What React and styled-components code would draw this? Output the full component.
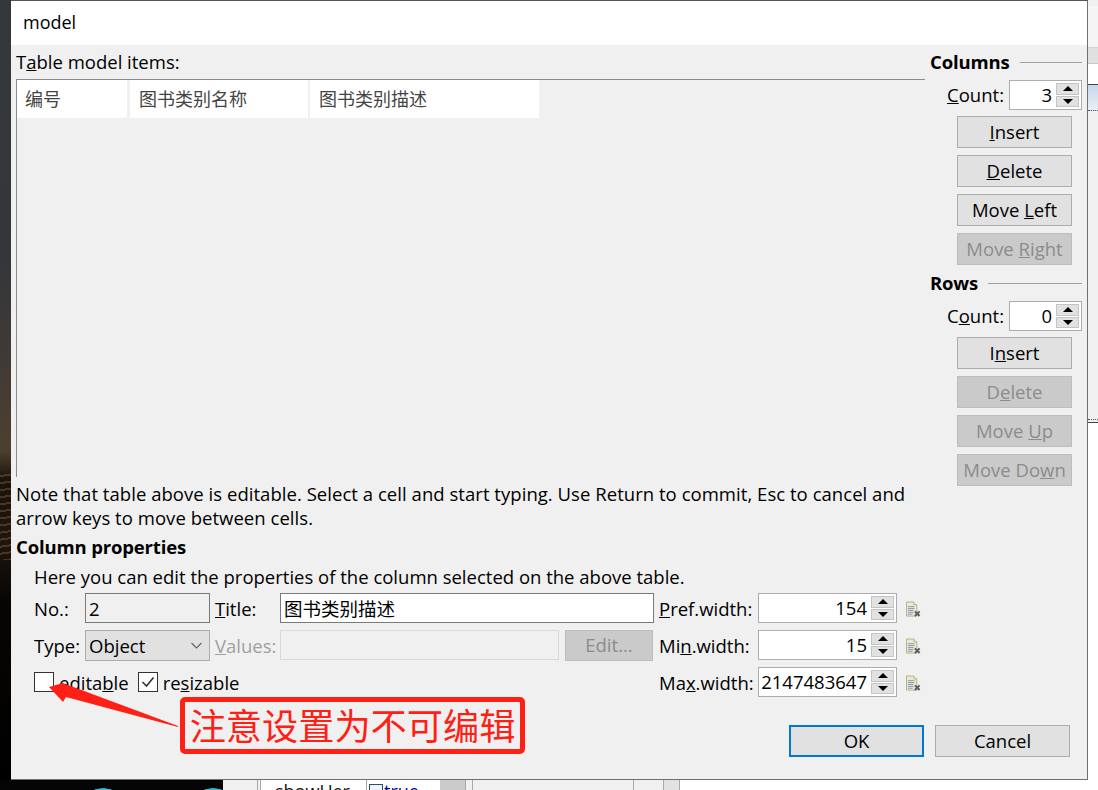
import styled, { createGlobalStyle } from "styled-components"

const UI_FONT = `"Open Sans", "Noto Sans CJK SC", sans-serif`

const GlobalStyle = createGlobalStyle`
    html, body {
        margin: 0;
        padding: 0;
        width: 1098px;
        height: 790px;
        overflow: hidden;
        background: #f0f0f0;
    }
    * {
        box-sizing: border-box;
    }
`

const Arrow = ({ up }) => <ArrowMark $up={up} />

const Spinner = ({ value, width }) => (
    <SpinBox $width={width}>
        <SpinValue>{value}</SpinValue>
        <SpinButtons>
            <SpinButton><Arrow up /></SpinButton>
            <SpinButton><Arrow /></SpinButton>
        </SpinButtons>
    </SpinBox>
)

const ResetIcon = () => (
    <svg width="16" height="17" viewBox="0 0 16 17">
        <path d="M.5.5h8l3 3v12h-11z" fill="#eeead2" stroke="#b8ac80" />
        <path d="M8.5.5v3h3" fill="#fff" stroke="#b8ac80" />
        <path d="M2 5.5h7M2 7.5h7M2 9.5h6M2 11.5h6M2 13.5h5" stroke="#7d93bb" />
        <path d="M9.5 10.5l5 5M14.5 10.5l-5 5" stroke="#596066" strokeWidth="2.2" />
    </svg>
)

const App = () => (
    <Desktop>
        <GlobalStyle />
        <Wallpaper />
        <Dialog>
            <TitleBar>model</TitleBar>
            <Body>
                <MainPane>
                    <TableLabel>T<Mn>a</Mn>ble model items:</TableLabel>
                    <TableArea>
                        <HeaderRow>
                            <HeaderCell $width={110} $pad={8} $after={3}>编号</HeaderCell>
                            <HeaderCell $width={178} $after={2}>图书类别名称</HeaderCell>
                            <HeaderCell $width={229}>图书类别描述</HeaderCell>
                        </HeaderRow>
                    </TableArea>
                    <Note>
                        Note that table above is editable. Select a cell and start typing. Use Return to commit, Esc to cancel and
                        arrow keys to move between cells.
                    </Note>
                    <PropsTitle>Column properties</PropsTitle>
                    <Hint>Here you can edit the properties of the column selected on the above table.</Hint>
                    <PropsGrid>
                        <FieldLabel>No.:</FieldLabel>
                        <TextField $readOnly>2</TextField>
                        <FieldLabel $indent><Mn>T</Mn>itle:</FieldLabel>
                        <TextField>图书类别描述</TextField>
                        <FieldLabel $indent><Mn>P</Mn>ref.width:</FieldLabel>
                        <Spinner value="154" />
                        <IconCell><ResetIcon /></IconCell>

                        <FieldLabel>Type:</FieldLabel>
                        <Select>
                            Object
                            <svg width="11" height="7" viewBox="0 0 11 7">
                                <path d="M.5 1l5 5 5-5" fill="none" stroke="#666" strokeWidth="1.2" />
                            </svg>
                        </Select>
                        <FieldLabel $indent $disabled><Mn>V</Mn>alues:</FieldLabel>
                        <ValuesCell>
                            <DisabledField />
                            <EditButton disabled>Edit...</EditButton>
                        </ValuesCell>
                        <FieldLabel $indent>Mi<Mn>n</Mn>.width:</FieldLabel>
                        <Spinner value="15" />
                        <IconCell><ResetIcon /></IconCell>

                        <ChecksCell>
                            <CheckBox />
                            <CheckLabel>edita<Mn>b</Mn>le</CheckLabel>
                            <CheckBox>
                                <svg width="18" height="18" viewBox="0 0 18 18">
                                    <path d="M3.5 9l4 4 7-8.5" fill="none" stroke="#333" strokeWidth="1.6" />
                                </svg>
                            </CheckBox>
                            <CheckLabel>re<Mn>s</Mn>izable</CheckLabel>
                        </ChecksCell>
                        <FieldLabel $indent>Ma<Mn>x</Mn>.width:</FieldLabel>
                        <Spinner value="2147483647" />
                        <IconCell><ResetIcon /></IconCell>
                    </PropsGrid>
                </MainPane>
                <SidePane>
                    <GroupHead>
                        <SectionTitle>Columns</SectionTitle>
                        <Rule />
                    </GroupHead>
                    <CountRow>
                        <CountLabel><Mn>C</Mn>ount:</CountLabel>
                        <Spinner value="3" width={73} />
                    </CountRow>
                    <SideButton><Mn>I</Mn>nsert</SideButton>
                    <SideButton><Mn>D</Mn>elete</SideButton>
                    <SideButton>Move <Mn>L</Mn>eft</SideButton>
                    <SideButton disabled>Move <Mn>R</Mn>ight</SideButton>
                    <GroupHead>
                        <SectionTitle>Rows</SectionTitle>
                        <Rule />
                    </GroupHead>
                    <CountRow>
                        <CountLabel>C<Mn>o</Mn>unt:</CountLabel>
                        <Spinner value="0" width={73} />
                    </CountRow>
                    <SideButton>I<Mn>n</Mn>sert</SideButton>
                    <SideButton disabled>D<Mn>e</Mn>lete</SideButton>
                    <SideButton disabled>Move <Mn>U</Mn>p</SideButton>
                    <SideButton disabled>Move Do<Mn>w</Mn>n</SideButton>
                </SidePane>
            </Body>
            <Footer>
                <FooterButton $primary>OK</FooterButton>
                <FooterButton>Cancel</FooterButton>
            </Footer>
            <CalloutArrow width="140" height="50" viewBox="0 0 140 50">
                <path d="M0 6 L14 2 L19 4 L129 45 L129 46 L17 16 L14 21 Z" fill="#ff2015" />
            </CalloutArrow>
            <Callout>注意设置为不可编辑</Callout>
        </Dialog>
        <BehindRight>
            <BandTop />
            <BandGray />
            <BandWhite />
            <BandBlue />
            <BandPlain />
            <BandBottom />
        </BehindRight>
        <BehindBottom>
            <DarkPart />
            <StripCell $width={34} />
            <StripCell $width={3} $edge />
            <StripCell $width={106} $bg="#fff" $edge><StripText>showUer</StripText></StripCell>
            <StripCell $width={74} $bg="#fff" $edge>
                <TinyCheck />
                <StripText $blue>true</StripText>
            </StripCell>
            <StripCell $width={25} $bg="#cbcbcb" />
            <StripCell $width={7} $edge />
            <StripCell $width={161} $edge />
            <StripCell $width={30} $edge />
            <StripCell $width={16} $bg="#e2e2e2" $edge />
            <StripCell $width={419} $bg="#fff" $edge />
        </BehindBottom>
    </Desktop>
)

export default App

const Desktop = styled.div`
    width: 1098px;
    height: 790px;
    display: grid;
    grid-template-columns: 11px 1077px 10px;
    grid-template-rows: 780px 10px;
    overflow: hidden;
    font-family: ${UI_FONT};
    font-size: 18.5px;
    color: #000;
`

const Wallpaper = styled.div`
    background:
        repeating-linear-gradient(172deg, transparent 0, transparent 5px, rgba(150, 120, 80, 0.35) 5px, rgba(150, 120, 80, 0.35) 7px) 0 470px / 100% 90px no-repeat,
        linear-gradient(
            180deg,
            #35383b 0,
            #34363a 260px,
            #463c33 400px,
            #4d4030 450px,
            #1a130c 480px,
            #21160d 540px,
            #080604 600px,
            #000 780px
        );
`

const Dialog = styled.div`
    position: relative;
    display: flex;
    flex-direction: column;
    background: #f0f0f0;
    border-top: 1px solid #555;
    border-right: 1px solid #707070;
    border-bottom: 1px solid #707070;
`

const TitleBar = styled.div`
    height: 44px;
    padding: 0 0 2px 12px;
    display: flex;
    align-items: center;
    background: #fff;
    font-size: 18px;
`

const Body = styled.div`
    display: flex;
    height: 667px;
`

const MainPane = styled.div`
    width: 914px;
    padding: 6px 0 0 5px;
`

const TableLabel = styled.div`
    height: 22px;
    line-height: 22px;
`

const TableArea = styled.div`
    margin-top: 6px;
    height: 398px;
    border-top: 1px solid #8a8a95;
    border-left: 1px solid #8a8a95;
`

const HeaderRow = styled.div`
    display: flex;
    height: 38px;
`

const HeaderCell = styled.div`
    width: ${(props) => props.$width}px;
    margin-right: ${(props) => props.$after || 0}px;
    padding: 0 0 3px ${(props) => props.$pad || 9}px;
    display: flex;
    align-items: center;
    background: #fff;
    color: #444;
    font-size: 18px;
`

const Note = styled.div`
    margin-top: 5px;
    width: 905px;
    line-height: 24px;
    letter-spacing: 0.04px;
`

const SectionTitle = styled.div`
    font-weight: 700;
    height: 22px;
    line-height: 22px;
    letter-spacing: -0.15px;
`

const PropsTitle = styled(SectionTitle)`
    margin-top: 6px;
`

const Hint = styled.div`
    margin-top: 8px;
    padding-left: 18px;
    line-height: 22px;
`

const PropsGrid = styled.div`
    margin: 5px 0 0 18px;
    display: grid;
    grid-template-columns: 51px 125px 70px 374px 104px 139px 24px;
    grid-auto-rows: 30px;
    row-gap: 7px;
    align-items: center;
`

const FieldLabel = styled.div`
    padding-left: ${(props) => (props.$indent ? 5 : 0)}px;
    color: ${(props) => (props.$disabled ? "#a0a0a0" : "#000")};
    white-space: nowrap;
`

const CountLabel = styled(FieldLabel)`
    margin-top: -2px;
`

const TextField = styled.div`
    height: 30px;
    padding-left: 3px;
    display: flex;
    align-items: center;
    border: 1px solid #7a7a7a;
    background: ${(props) => (props.$readOnly ? "#f0f0f0" : "#fff")};
`

const Select = styled.div`
    height: 31px;
    padding: 0 7px 0 3px;
    display: flex;
    align-items: center;
    justify-content: space-between;
    border: 1px solid #adadad;
    background: #e1e1e1;
`

const ValuesCell = styled.div`
    display: flex;
    gap: 6px;
`

const DisabledField = styled.div`
    width: 279px;
    height: 30px;
    border: 1px solid #d9d9d9;
    background: #f0f0f0;
`

const ChecksCell = styled.div`
    grid-column: 1 / span 4;
    display: flex;
    align-items: center;
`

const CheckBox = styled.div`
    width: 20px;
    height: 20px;
    display: flex;
    align-items: center;
    justify-content: center;
    border: 1px solid #333;
    background: #fff;
`

const CheckLabel = styled.div`
    padding: 0 9px 0 5px;
`

const IconCell = styled.div`
    padding: 2px 0 0 9px;
    display: flex;
    align-items: center;
`

const SpinBox = styled.div`
    width: ${(props) => props.$width || 139}px;
    height: 30px;
    padding: 2px;
    display: flex;
    border: 1px solid #adadad;
    background: #fff;
`

const SpinValue = styled.div`
    flex: 1;
    padding-right: 4px;
    text-align: right;
    line-height: 24px;
    white-space: nowrap;
`

const SpinButtons = styled.div`
    width: 23px;
    display: flex;
    flex-direction: column;
    gap: 1px;
`

const SpinButton = styled.div`
    flex: 1;
    display: flex;
    align-items: center;
    justify-content: center;
    background: #e1e1e1;
    border: 1px solid #c4c4c4;
`

const ArrowMark = styled.div`
    width: 0;
    height: 0;
    border-left: 5px solid transparent;
    border-right: 5px solid transparent;
    border-bottom: ${(props) => (props.$up ? "5px solid #000" : "none")};
    border-top: ${(props) => (props.$up ? "none" : "5px solid #000")};
`

const Mn = styled.span`
    text-decoration: underline;
`

const SidePane = styled.div`
    width: 162px;
    padding: 6px 5px 0 5px;
`

const GroupHead = styled.div`
    display: flex;
    align-items: center;
    gap: 10px;
    margin-bottom: 7px;

    & ~ & {
        margin-top: 7px;
    }
`

const Rule = styled.div`
    flex: 1;
    height: 1px;
    background: #a0a0a0;
`

const CountRow = styled.div`
    display: flex;
    justify-content: flex-end;
    align-items: center;
    gap: 5px;
    margin-bottom: 6px;
`

const PlainButton = styled.button`
    display: block;
    padding: 0 0 2px;
    font: inherit;
    color: #000;
    white-space: nowrap;
    border: 1px solid #adadad;
    background: #e1e1e1;

    &:disabled {
        color: #8c8c8c;
        border-color: #bdbdbd;
        background: #cacaca;
    }
`

const SideButton = styled(PlainButton)`
    width: 115px;
    height: 32px;
    margin: 0 0 7px 27px;
`

const EditButton = styled(PlainButton)`
    width: 88px;
    height: 31px;
`

const Footer = styled.div`
    flex: 1;
    padding: 13px 17px 0 0;
    display: flex;
    justify-content: flex-end;
    gap: 11px;
`

const FooterButton = styled(PlainButton)`
    width: 135px;
    height: 32px;
    border: ${(props) => (props.$primary ? "2px solid #0078d7" : "1px solid #adadad")};
`

const CalloutArrow = styled.svg`
    position: absolute;
    left: 38px;
    top: 680px;
`

const Callout = styled.div`
    position: absolute;
    left: 169px;
    top: 696px;
    width: 345px;
    height: 57px;
    padding-bottom: 2px;
    display: flex;
    align-items: center;
    justify-content: center;
    border: 5px solid #ff2015;
    border-radius: 5px;
    color: #ff2015;
    font-size: 36.2px;
    white-space: nowrap;
`

const BehindRight = styled.div`
    display: flex;
    flex-direction: column;
    background: #f0f0f0;
`

const BandTop = styled.div`
    height: 47px;
    background: linear-gradient(180deg, #f0f0f0 0, #f0f0f0 6px, #f5f5f5 6px);
`

const BandGray = styled.div`
    height: 17px;
    background: #e0e0e0;
    border-top: 1px solid #d4d4d4;
    border-bottom: 1px solid #c8c8c8;
`

const BandWhite = styled.div`
    height: 21px;
    background: #fff;
    border-bottom: 1px solid #444;
`

const BandBlue = styled.div`
    height: 26px;
    background: linear-gradient(180deg, #c6d8ea, #eaf0f6);
    border-bottom: 1px dotted #555;
`

const BandPlain = styled.div`
    height: 309px;
    border-bottom: 1px dotted #555;
`

const BandBottom = styled.div`
    flex: 1;
    margin-top: 2px;
    background: #fff;
    border-top: 1px solid #444;
`

const BehindBottom = styled.div`
    grid-column: 1 / -1;
    display: flex;
    overflow: hidden;
    background: #f0f0f0;
`

const DarkPart = styled.div`
    width: 223px;
    background:
        radial-gradient(circle 28px at 103px 36px, #2bbdd0 98%, transparent 100%),
        radial-gradient(circle 28px at 213px 36px, #2bbdd0 98%, transparent 100%),
        #050505;
`

const StripCell = styled.div`
    width: ${(props) => props.$width}px;
    padding-left: 2px;
    display: flex;
    gap: 1px;
    background: ${(props) => props.$bg || "#f0f0f0"};
    border-left: ${(props) => (props.$edge ? "1px solid #a8a8a8" : "none")};
`

const StripText = styled.div`
    padding-left: ${(props) => (props.$blue ? 0 : 12)}px;
    color: ${(props) => (props.$blue ? "#00009a" : "#111")};
    font-size: 18px;
    line-height: 22px;
    white-space: nowrap;
`

const TinyCheck = styled.div`
    width: 14px;
    height: 14px;
    margin-top: 4px;
    border: 1px solid #2d4a70;
    background: #eef4fa;
`
